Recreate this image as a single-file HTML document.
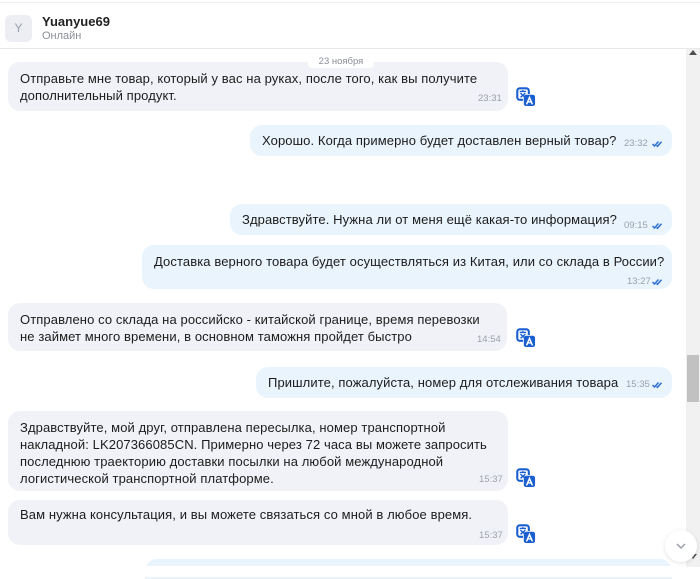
<!DOCTYPE html>
<html><head><meta charset="utf-8"><style>
*{margin:0;padding:0;box-sizing:border-box}
body{width:700px;height:577px;background:#fff;font-family:"Liberation Sans","DejaVu Sans",sans-serif;position:relative;overflow:hidden;color:#1c1c1c}
.hdr{position:absolute;left:0;top:2px;width:700px;height:47px;border-top:1px solid #eceef2;border-bottom:1px solid #e6e8ec;background:#fff}
.av{position:absolute;left:5px;top:12px;width:27px;height:27px;border-radius:6px;background:#eceef4;color:#9aa0ab;font-size:12px;text-align:center;line-height:27px}
.nm{position:absolute;left:42px;top:11px;font-size:13px;font-weight:bold;color:#222}
.st{position:absolute;left:42px;top:27px;font-size:11px;color:#8a8f98}
.b{position:absolute;border-radius:12px;font-size:13px;line-height:17px;padding:0 12px;letter-spacing:0.1px;white-space:nowrap;overflow:hidden}
.r{background:#f0f2f7;left:8px;width:500px}
.s{background:#e9f4fd;right:28px}
.t{position:absolute;font-size:9.5px;color:#9aa0aa}
.ck{position:absolute;width:13px;height:8px}
.tr{position:absolute;left:516px;width:20px;height:20px}
.sb{position:absolute;left:686px;top:49px;width:14px;height:518px;background:#f1f1f1}
.th{position:absolute;left:687px;top:355px;width:12px;height:47px;background:#c1c1c1}
</style></head><body>
<div class="hdr"><div class="av">Y</div><div class="nm">Yuanyue69</div><div class="st">Онлайн</div></div>

<svg width="0" height="0" style="position:absolute"><defs>
<g id="tr"><rect x="1.2" y="1.2" width="11" height="11" rx="2.5" fill="#fff" stroke="#1a5fd0" stroke-width="2"/><rect x="7" y="7" width="11.5" height="11.5" rx="2.5" fill="#1a5fd0" stroke="#fff" stroke-width="0.8"/><path d="M3.5 4.2h6M6.5 3v1.5M4.2 5.8l4.5 4M8.8 5.8l-4.5 4" stroke="#1a5fd0" stroke-width="1.3" fill="none"/><path d="M10 16.5l2.8-6.5 2.8 6.5M11 14.2h3.6" stroke="#fff" stroke-width="1.4" fill="none"/></g>
<g id="ck"><path d="M1 4l2 2 4-4.5M5 5.5l1 0.8 4-4.5" stroke="#2e6fd1" stroke-width="1.5" fill="none"/></g>
</defs></svg>

<div class="b r" style="top:62px;height:49px;padding-top:8px">Отправьте мне товар, который у вас на руках, после того, как вы получите<br>дополнительный продукт.</div>
<div style="position:absolute;left:308px;top:56px;width:66px;height:12px;background:#fff;border-radius:4px;font-size:9.5px;color:#8a8f98;text-align:center;line-height:12px">23 ноября</div>
<div class="t" style="left:478px;top:93px">23:31</div>
<svg class="tr" style="top:87px" viewBox="0 0 19 19"><use href="#tr"/></svg>

<div class="b s" style="top:125px;left:250px;height:31px;line-height:31px">Хорошо. Когда примерно будет доставлен верный товар?</div>
<div class="t" style="left:624px;top:138px">23:32</div><svg class="ck" style="left:651px;top:140px" viewBox="0 0 12 8"><use href="#ck"/></svg>

<div class="b s" style="top:204px;left:230px;height:31px;line-height:31px">Здравствуйте. Нужна ли от меня ещё какая-то информация?</div>
<div class="t" style="left:624px;top:220px">09:15</div><svg class="ck" style="left:651px;top:222px" viewBox="0 0 12 8"><use href="#ck"/></svg>

<div class="b s" style="top:245px;left:142px;height:44px;padding-top:8px">Доставка верного товара будет осуществляться из Китая, или со склада в России?</div>
<div class="t" style="left:627px;top:276px">13:27</div><svg class="ck" style="left:651px;top:278px" viewBox="0 0 12 8"><use href="#ck"/></svg>

<div class="b r" style="top:303px;height:48px;padding-top:8px;width:499px">Отправлено со склада на российско - китайской границе, время перевозки<br>не займет много времени, в основном таможня пройдет быстро</div>
<div class="t" style="left:477px;top:334px">14:54</div>
<svg class="tr" style="top:328px" viewBox="0 0 19 19"><use href="#tr"/></svg>

<div class="b s" style="top:367px;left:256px;height:31px;line-height:31px">Пришлите, пожалуйста, номер для отслеживания товара</div>
<div class="t" style="left:626px;top:379px">15:35</div><svg class="ck" style="left:651px;top:381px" viewBox="0 0 12 8"><use href="#ck"/></svg>

<div class="b r" style="top:411px;height:80px;padding-top:8px">Здравствуйте, мой друг, отправлена пересылка, номер транспортной<br>накладной: LK207366085CN. Примерно через 72 часа вы можете запросить<br>последнюю траекторию доставки посылки на любой международной<br>логистической транспортной платформе.</div>
<div class="t" style="left:479px;top:474px">15:37</div>
<svg class="tr" style="top:468px" viewBox="0 0 19 19"><use href="#tr"/></svg>

<div class="b r" style="top:500px;height:45px;padding-top:6px">Вам нужна консультация, и вы можете связаться со мной в любое время.</div>
<div class="t" style="left:479px;top:530px">15:37</div>
<svg class="tr" style="top:524px" viewBox="0 0 19 19"><use href="#tr"/></svg>

<div class="b s" style="top:559px;left:145px;height:20px;border-radius:12px 12px 0 0"></div>
<div style="position:absolute;left:0;top:566px;width:700px;height:11px;background:#fff"></div>

<div class="sb"></div><div class="th"></div>
<div style="position:absolute;left:689px;top:50px;width:0;height:0;border-left:4px solid transparent;border-right:4px solid transparent;border-bottom:5px solid #505050"></div>
<div style="position:absolute;left:689px;top:554px;width:0;height:0;border-left:4px solid transparent;border-right:4px solid transparent;border-top:5px solid #505050"></div>
<div style="position:absolute;left:665px;top:530px;width:32px;height:32px;border-radius:50%;background:#fff;box-shadow:0 1px 4px rgba(0,0,0,.12)"><svg width="32" height="32" viewBox="0 0 32 32"><path d="M12 14l4 4 4-4" stroke="#9aa0aa" stroke-width="1.5" fill="none"/></svg></div>
</body></html>
